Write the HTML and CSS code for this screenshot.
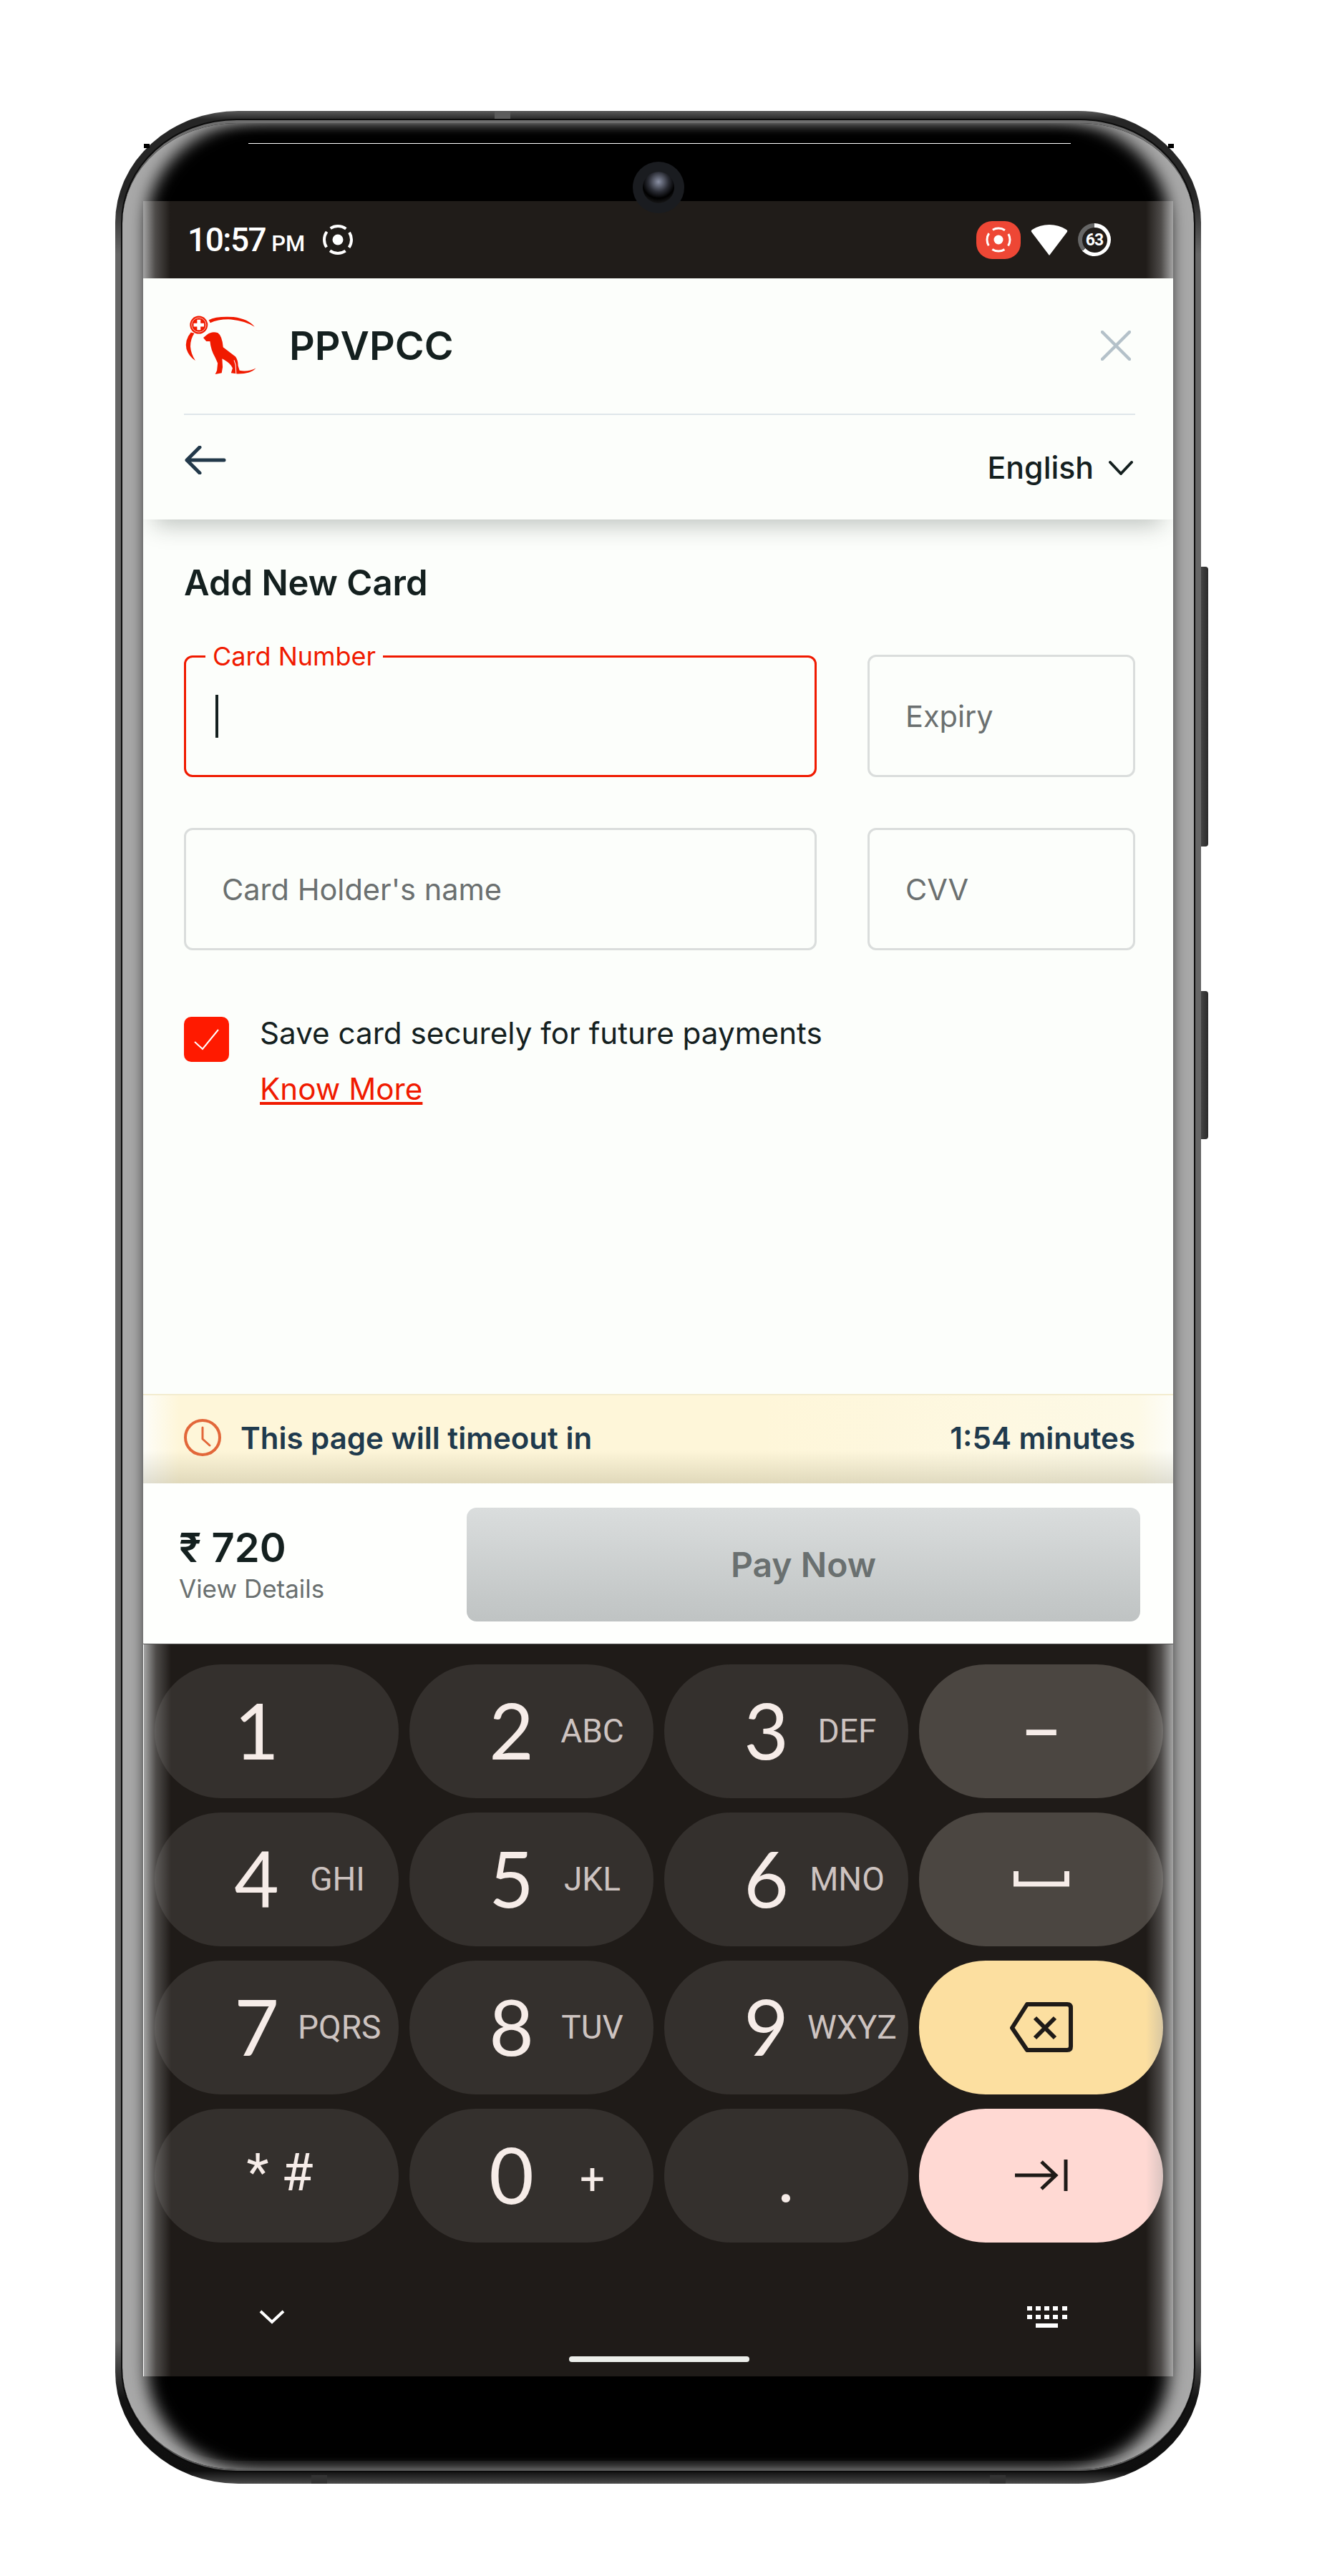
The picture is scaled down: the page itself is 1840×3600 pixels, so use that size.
FILE: index.html
```html
<!DOCTYPE html>
<html lang="en">
  <head>
    <meta charset="UTF-8" />
    <meta name="viewport" content="width=device-width, initial-scale=1.0" />
    <title>Add New Card</title>
    <link rel="stylesheet" href="styles.css">
  </head>
  <body>
    <div class="phone">
      <div class="side-btn side-btn-power"></div>
      <div class="side-btn side-btn-volume"></div>
      <div class="band band-top"></div>
      <div class="band band-bottom-left"></div>
      <div class="band band-bottom-right"></div>

      <div class="glass">
        <div class="speaker"></div>
        <div class="camera"><div class="lens"></div></div>

        <div class="screen">
          <!-- Status bar -->
          <div class="status-bar">
            <div class="status-left">
              <span class="time">10:57</span>
              <span class="ampm">PM</span>
              <svg class="rec-icon" viewBox="0 0 44 44">
                <circle cx="22" cy="22" r="7.5" fill="#fff" />
                <circle cx="22" cy="22" r="19" fill="none" stroke="#fff" stroke-width="4" stroke-dasharray="23 6.85" stroke-dashoffset="11.5" />
              </svg>
            </div>
            <div class="status-right">
              <div class="rec-pill">
                <svg viewBox="0 0 44 44" width="44" height="44">
                  <circle cx="22" cy="22" r="6.5" fill="#fff" />
                  <circle cx="22" cy="22" r="16" fill="none" stroke="#fff" stroke-width="3" stroke-dasharray="18 7.13" stroke-dashoffset="9" />
                </svg>
              </div>
              <svg class="wifi" viewBox="0 0 52 44">
                <path d="M26 44 L1 11 Q0 9 2 8 Q13 1 26 1 Q39 1 50 8 Q52 9 51 11 Z" fill="#fff" />
              </svg>
              <div class="battery"><span>63</span></div>
            </div>
          </div>

          <!-- Checkout header -->
          <div class="header">
            <div class="header-top">
              <svg class="logo" viewBox="60 65 300 250">
                <circle cx="120" cy="108" r="36" fill="#f01a00" />
                <circle cx="120" cy="108" r="29" fill="none" stroke="#fbd5cf" stroke-width="2.5" />
                <path d="M113 87h14v14h14v14h-14v14h-14v-14h-14v-14h14z" fill="#fff" />
                <path d="M160 88 Q190 72 260 76 Q320 84 345 116 Q310 92 250 86 Q200 84 166 100 Z" fill="#f01a00" />
                <path d="M88 138 Q62 170 70 205 Q80 235 106 252 Q88 225 86 195 Q86 165 102 142 Z" fill="#f01a00" />
                <path d="M138 160 L152 148 Q172 132 197 140 Q214 152 218 198 L268 236 Q278 250 278 272 L284 292 Q320 298 350 282 Q330 306 272 305 L250 302 L256 282 Q248 262 214 244 L216 278 L212 302 L186 307 L193 292 L196 262 L186 240 Q168 208 165 174 L150 174 Z" fill="#f01a00" />
                <path d="M262 250 L268 268 L270 304" fill="none" stroke="#fff" stroke-width="3" />
              </svg>
              <span class="merchant">PPVPCC</span>
              <svg class="close" viewBox="0 0 42 42">
                <path d="M2 2 L40 40 M40 2 L2 40" stroke="#b4c1c9" stroke-width="4.5" stroke-linecap="round" fill="none" />
              </svg>
            </div>
            <div class="header-bottom">
              <svg class="back" viewBox="0 0 58 40">
                <path d="M3 20 H55 M21 2 L3 20 L21 38" stroke="#22394a" stroke-width="5" stroke-linecap="round" stroke-linejoin="round" fill="none" />
              </svg>
              <div class="lang">
                <span>English</span>
                <svg viewBox="0 0 34 22" width="34" height="22">
                  <path d="M2 3 L17 19 L32 3" stroke="#14201f" stroke-width="4" stroke-linecap="round" stroke-linejoin="round" fill="none" />
                </svg>
              </div>
            </div>
          </div>

          <!-- Form -->
          <div class="content">
            <h1>Add New Card</h1>
            <div class="fields">
              <fieldset class="field field-active">
                <legend>Card Number</legend>
                <div class="caret"></div>
              </fieldset>
              <div class="field"><span class="placeholder">Expiry</span></div>
              <div class="field"><span class="placeholder">Card Holder's name</span></div>
              <div class="field"><span class="placeholder">CVV</span></div>
            </div>
            <div class="save-row">
              <div class="checkbox">
                <svg viewBox="0 0 36 30" width="36" height="30">
                  <path d="M1 18 L12 28 L34 1" stroke="#fff" stroke-width="2" fill="none" />
                </svg>
              </div>
              <div class="save-text">
                <p>Save card securely for future payments</p>
                <a href="#">Know More</a>
              </div>
            </div>
          </div>

          <!-- Timeout -->
          <div class="timeout">
            <div class="timeout-label">
              <svg viewBox="0 0 52 54" width="52" height="54">
                <circle cx="26" cy="27" r="24" fill="none" stroke="#e2673a" stroke-width="4" />
                <path d="M26 13 V29 L36 38" fill="none" stroke="#e2673a" stroke-width="3" stroke-linecap="round" stroke-linejoin="round" />
              </svg>
              <span>This page will timeout in</span>
            </div>
            <span>1:54 minutes</span>
          </div>

          <!-- Pay bar -->
          <div class="pay-bar">
            <div class="amount">
              <div class="price">₹ 720</div>
              <div class="details">View Details</div>
            </div>
            <button class="pay-btn">Pay Now</button>
          </div>

          <!-- Number keyboard -->
          <div class="keyboard">
            <div class="keys">
              <div class="key"><span class="digit">1</span></div>
              <div class="key"><span class="digit">2</span><span class="sub">ABC</span></div>
              <div class="key"><span class="digit">3</span><span class="sub">DEF</span></div>
              <div class="key key-fn"><span class="dash">–</span></div>

              <div class="key"><span class="digit">4</span><span class="sub">GHI</span></div>
              <div class="key"><span class="digit">5</span><span class="sub">JKL</span></div>
              <div class="key"><span class="digit">6</span><span class="sub">MNO</span></div>
              <div class="key key-fn">
                <svg viewBox="0 0 78 22" width="78" height="22">
                  <path d="M3.5 0 V18 H74.5 V0" fill="none" stroke="#f6ece8" stroke-width="7" />
                </svg>
              </div>

              <div class="key"><span class="digit">7</span><span class="sub">PQRS</span></div>
              <div class="key"><span class="digit">8</span><span class="sub">TUV</span></div>
              <div class="key"><span class="digit">9</span><span class="sub">WXYZ</span></div>
              <div class="key key-back">
                <svg viewBox="0 0 88 70" width="88" height="70">
                  <path d="M3 36 L24 3 H80 Q85 3 85 8 V62 Q85 67 80 67 H24 Z" fill="none" stroke="#1f1b18" stroke-width="6" stroke-linejoin="round" />
                  <path d="M35 22 L63 50 M63 22 L35 50" stroke="#1f1b18" stroke-width="6" fill="none" />
                </svg>
              </div>

              <div class="key"><span class="symbols">* #</span></div>
              <div class="key"><span class="digit">0</span><span class="plus">+</span></div>
              <div class="key key-dot"><span class="dot">.</span></div>
              <div class="key key-go">
                <svg viewBox="0 0 76 44" width="76" height="44">
                  <path d="M1 22 H58 M38 3 L58 22 L38 41 M72 0 V44" stroke="#1f1b18" stroke-width="5" fill="none" />
                </svg>
              </div>
            </div>

            <div class="nav-row">
              <svg viewBox="0 0 36 22" width="36" height="22">
                <path d="M2 3 L18 18 L34 3" stroke="#fff" stroke-width="4" fill="none" />
              </svg>
              <svg viewBox="0 0 56 30" width="56" height="30" fill="#fff">
                <rect x="0" y="0" width="7" height="6" /><rect x="12" y="0" width="7" height="6" /><rect x="24" y="0" width="7" height="6" /><rect x="36" y="0" width="7" height="6" /><rect x="49" y="0" width="7" height="6" />
                <rect x="0" y="12" width="7" height="6" /><rect x="12" y="12" width="7" height="6" /><rect x="24" y="12" width="7" height="6" /><rect x="36" y="12" width="7" height="6" /><rect x="49" y="12" width="7" height="6" />
                <rect x="12" y="24" width="31" height="6" />
              </svg>
            </div>
            <div class="home-pill"></div>
          </div>
        </div>
      </div>
    </div>
  </body>
</html>
```

FILE: styles.css
```css
/* Page */
body {
  margin: 0;
  background-color: #fff;
  font-family: Inter, "Liberation Sans", sans-serif;
  color: #14201f;
}

p,
h1 {
  margin: 0;
}

/* Phone frame */
.phone {
  position: relative;
  box-sizing: border-box;
  width: 1517px;
  height: 3316px;
  margin: 155px 0 0 161px;
  padding: 13px 10px 18px 10px;
  border-radius: 172px / 156px;
  background: linear-gradient(#5a5a5a, #262626 12px, #262626 120px, #666 200px, #666 calc(100% - 200px), #141414 calc(100% - 120px), #0e0e0e calc(100% - 18px), #4a4a4a);
}

/* tiny square corners that poke out of the bezel */
.phone::before,
.phone::after {
  content: "";
  position: absolute;
  top: 46px;
  width: 8px;
  height: 6px;
  background-color: #000;
}

.phone::before {
  left: 40px;
}

.phone::after {
  right: 38px;
}

.side-btn {
  position: absolute;
  left: 100%;
  width: 10px;
  background: linear-gradient(to right, #444, #2a2a2a);
  border-radius: 0 4px 4px 0;
}

.side-btn-power {
  top: 637px;
  height: 391px;
}

.side-btn-volume {
  top: 1230px;
  height: 207px;
}

.band {
  position: absolute;
  width: 22px;
  height: 12px;
  background-color: #333;
}

.band-top {
  top: 0;
  left: 530px;
  background-color: #5c5c5c;
}

.band-bottom-left {
  bottom: 0;
  left: 274px;
}

.band-bottom-right {
  bottom: 0;
  left: 1222px;
}

.glass {
  position: relative;
  box-sizing: border-box;
  height: 100%;
  padding: 109px 29px 0 29px;
  border-radius: 160px / 144px;
  background-color: #000;
  border-top: 4px solid #6e6e6e;
  border-bottom: 2px solid #5a5a5a;
  box-shadow: 0 0 0 2px #0c0c0c, inset 40px 0 22px -6px #a8a8a8, inset -40px 0 22px -6px #a8a8a8, inset 0 -12px 0 #0f0f0f;
}

.speaker {
  position: absolute;
  top: 28px;
  left: 176px;
  width: 1149px;
  height: 1px;
  background-color: #fff;
}

.camera {
  position: absolute;
  top: 54px;
  left: 713px;
  width: 72px;
  height: 72px;
  border-radius: 50%;
  background-color: #1a1c20;
  display: flex;
  align-items: center;
  justify-content: center;
  z-index: 2;
}

.lens {
  width: 44px;
  height: 44px;
  border-radius: 50%;
  background: radial-gradient(circle at 50% 32%, #8a90a4, #2a2c34 38%, #000 62%, #2e2e30 100%);
}

/* Screen */
.screen {
  display: flex;
  flex-direction: column;
  width: 1439px;
  overflow: hidden;
}

.status-bar {
  position: relative;
  box-sizing: border-box;
  flex: none;
  height: 108px;
  padding: 0 87px 0 62px;
  background-color: #201c19;
  display: flex;
  align-items: center;
  justify-content: space-between;
  color: #fff;
  font-family: Roboto, sans-serif;
}

.status-bar::before,
.keyboard::before {
  content: "";
  position: absolute;
  z-index: 2;
  top: 0;
  bottom: 0;
  left: 0;
  width: 38px;
  background: linear-gradient(to right, #a4a4a4, rgba(164, 164, 164, 0.35) 45%, rgba(164, 164, 164, 0));
}

.keyboard::before {
  border-left: 1px solid #fff;
}

.status-bar::after,
.keyboard::after {
  content: "";
  position: absolute;
  z-index: 2;
  top: 0;
  bottom: 0;
  right: 0;
  width: 38px;
  background: linear-gradient(to left, #a4a4a4, rgba(164, 164, 164, 0.35) 45%, rgba(164, 164, 164, 0));
}

.status-left {
  display: flex;
  align-items: baseline;
}

.time {
  font-size: 46px;
  font-weight: 500;
  letter-spacing: -1.5px;
}

.ampm {
  font-size: 31px;
  font-weight: 500;
  margin-left: 8px;
}

.rec-icon {
  width: 44px;
  height: 44px;
  margin-left: 24px;
  align-self: center;
}

.status-right {
  display: flex;
  align-items: center;
  gap: 14px;
}

.rec-pill {
  width: 62px;
  height: 53px;
  border-radius: 22px;
  background-color: #ee4735;
  display: flex;
  align-items: center;
  justify-content: center;
}

.wifi {
  width: 52px;
  height: 44px;
}

.battery {
  width: 46px;
  height: 46px;
  border-radius: 50%;
  box-sizing: border-box;
  background: conic-gradient(#fff 63%, #666 63%);
  display: flex;
  align-items: center;
  justify-content: center;
  font-size: 23px;
  font-weight: 700;
  letter-spacing: -1px;
}

.battery span {
  width: 35px;
  height: 35px;
  line-height: 35px;
  border-radius: 50%;
  text-align: center;
  background-color: #201c19;
}

/* Header */
.header {
  position: relative;
  z-index: 1;
  flex: none;
  height: 337px;
  box-sizing: border-box;
  padding: 0 53px 0 57px;
  background-color: #fcfefb;
  box-shadow: 0 24px 30px -16px rgba(30, 40, 35, 0.28);
}

.header-top {
  height: 191px;
  box-sizing: border-box;
  border-bottom: 2px solid #dfe6ea;
  display: flex;
  align-items: center;
}

.logo {
  width: 104px;
  height: 87px;
  margin-top: -2px;
}

.merchant {
  margin-left: 43px;
  margin-top: -2px;
  font-size: 55.5px;
  font-weight: 600;
}

.close {
  width: 42px;
  height: 42px;
  margin-left: auto;
  margin-right: 6px;
  margin-top: -2px;
}

.header-bottom {
  display: flex;
  justify-content: space-between;
  padding-top: 43px;
}

.back {
  width: 58px;
  height: 40px;
  margin-left: 1px;
}

.lang {
  display: flex;
  align-items: center;
  gap: 21px;
  margin-top: 5px;
  margin-right: 3px;
  font-size: 42.8px;
  font-weight: 500;
}

/* Form */
.content {
  flex: none;
  height: 1222px;
  box-sizing: border-box;
  padding: 61px 53px 0 57px;
  background-color: #fcfefb;
}

h1 {
  font-size: 49px;
  font-weight: 600;
  line-height: 56px;
}

.fields {
  display: grid;
  grid-template-columns: 1fr 374px;
  grid-auto-rows: 171px;
  gap: 71px;
  margin-top: 72px;
}

.field {
  box-sizing: border-box;
  margin: 0;
  min-width: 0;
  padding: 0 0 0 50px;
  border: 3px solid #dadddc;
  border-radius: 12px;
  display: flex;
  align-items: center;
  font-size: 41.5px;
  color: #6b7070;
}

.field-active {
  display: block;
  position: relative;
  top: -10px;
  height: 181px;
  padding: 0 0 0 27px;
  border-color: #f01a00;
}

.field-active legend {
  padding: 0 10px;
  margin-left: 0;
  font-size: 36px;
  line-height: 24px;
  color: #f01a00;
}

.caret {
  width: 4px;
  height: 60px;
  margin: 42px 0 0 14px;
  background-color: #14201f;
}

.save-row {
  display: flex;
  gap: 43px;
  margin-top: 93px;
}

.checkbox {
  box-sizing: border-box;
  width: 63px;
  height: 63px;
  border-radius: 10px;
  background-color: #ff1a00;
  display: flex;
  align-items: center;
  justify-content: center;
}

.save-text {
  font-size: 42.2px;
}

.save-text p {
  line-height: 46px;
}

.save-text a {
  display: block;
  margin-top: 32px;
  color: #f01a00;
  text-decoration: underline;
  line-height: 46px;
}

/* Timeout strip */
.timeout {
  flex: none;
  height: 125px;
  box-sizing: border-box;
  padding: 0 53px 5px 57px;
  border-top: 2px solid #f3ecd0;
  background-color: #fef7da;
  background-image: linear-gradient(rgba(0, 0, 0, 0) 62%, rgba(90, 85, 50, 0.18)), linear-gradient(to right, #fdfdf8, #fef6d9 50px, #fef6d9 60%, #fdf9e6 calc(100% - 50px), #fdfdf8);
  display: flex;
  align-items: center;
  justify-content: space-between;
  font-size: 42px;
  font-weight: 600;
  color: #1f3a4d;
}

.timeout-label {
  display: flex;
  align-items: center;
  gap: 27px;
}

/* Pay bar */
.pay-bar {
  flex: none;
  height: 225px;
  box-sizing: border-box;
  padding: 34px 46px 31px 50px;
  background-color: #fefffd;
  display: flex;
  justify-content: space-between;
  border-bottom: 1px solid #555;
}

.amount {
  padding-top: 25px;
}

.price {
  font-size: 56px;
  font-weight: 600;
  line-height: 62px;
}

.details {
  margin-top: 5px;
  font-size: 35px;
  color: #6a7070;
}

.pay-btn {
  width: 941px;
  border: none;
  border-radius: 14px;
  background: linear-gradient(#dadddd, #bfc3c3);
  font-family: inherit;
  font-size: 48px;
  font-weight: 600;
  color: #6a7070;
}

/* Keyboard */
.keyboard {
  position: relative;
  flex: none;
  height: 1023px;
  box-sizing: border-box;
  padding: 28px 14px 0 16px;
  background-color: #1f1b18;
}

.keys {
  display: grid;
  grid-template-columns: repeat(4, 341px);
  grid-auto-rows: 186.5px;
  column-gap: 15px;
  row-gap: 20.5px;
  font-family: Roboto, sans-serif;
  color: #f6ece8;
}

.key {
  box-sizing: border-box;
  padding: 0 30px 0 85px;
  border-radius: 93px;
  background-color: #34302d;
  display: grid;
  grid-template-columns: 115px 1fr;
  align-items: center;
  justify-items: center;
}

.digit {
  font-family: Lato, Roboto, sans-serif;
  font-size: 108px;
  font-weight: 400;
  line-height: 1;
  margin-top: -5px;
}

.sub {
  font-size: 46px;
  font-weight: 400;
  color: #cdc3c0;
}

.plus {
  font-size: 62px;
  margin-top: 8px;
}

.symbols {
  grid-column: 1 / 3;
  font-size: 72px;
  margin: -8px 0 0 -46px;
}

.key-fn,
.key-back,
.key-go,
.key-dot {
  padding: 0;
  display: flex;
  justify-content: center;
}

.key-fn {
  background-color: #4b4641;
}

.key-back {
  background-color: #fcdfa0;
}

.key-go {
  background-color: #ffd9d3;
}

.dash {
  font-size: 84px;
  font-weight: 500;
  line-height: 1;
  margin-top: 6px;
}

.dot {
  font-size: 108px;
  font-weight: 400;
  line-height: 1;
}

.nav-row {
  display: flex;
  justify-content: space-between;
  align-items: center;
  margin-top: 89px;
  padding: 0 134px 0 146px;
}

.home-pill {
  width: 252px;
  height: 8px;
  margin: 40px auto 0;
  border-radius: 4px;
  background-color: #eceeea;
}
```
